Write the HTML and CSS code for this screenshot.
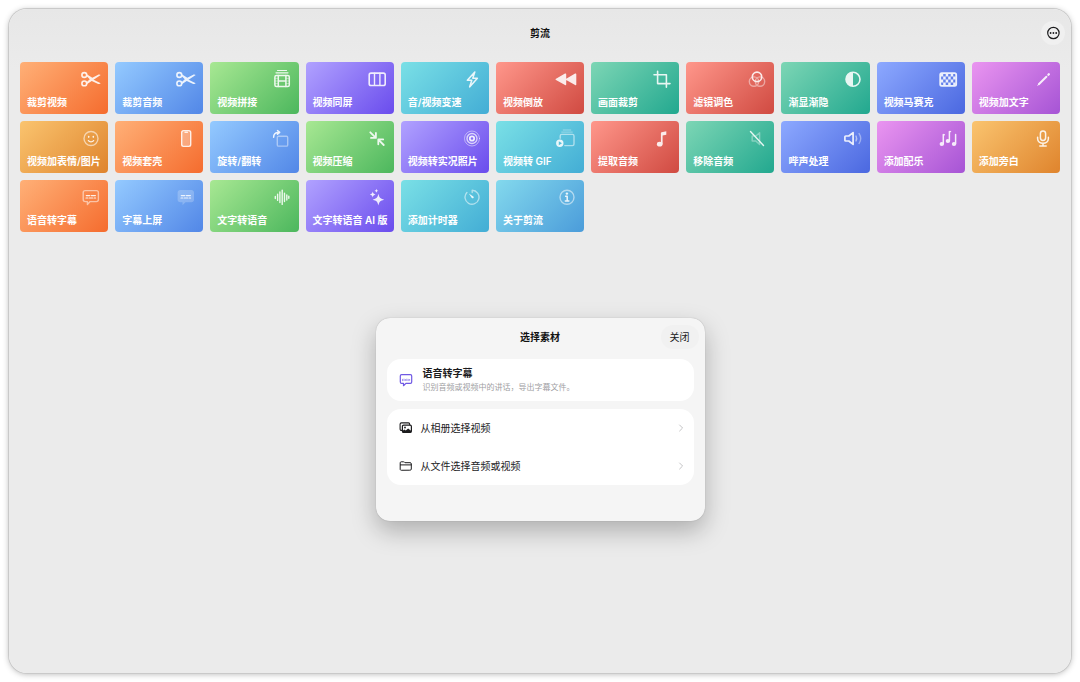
FILE: index.html
```html
<!DOCTYPE html>
<html lang="zh-CN">
<head>
<meta charset="utf-8">
<meta name="viewport" content="width=device-width, initial-scale=1">
<title>剪流</title>
<link rel="stylesheet" href="styles.css">
</head>
<body>
<svg class="sprite" aria-hidden="true">
  <symbol id="scissors" viewBox="0 0 24 24"><g stroke-width="1.6"><circle cx="5.3" cy="8" r="2.4"/><circle cx="5.3" cy="16.4" r="2.4"/></g><path class="solid" d="M7 8.5l1.2-.9 5.1 3.2 5.4-2.9c1.2-.6 2.3-.5 3 .2L8.2 16.9 7 15.8l3.8-3.6z"/><path class="solid" d="M13.6 12.3l8.1 4c-.7.8-1.9.9-3 .4l-7-3.3z"/></symbol>
  <symbol id="stack" viewBox="0 0 24 24"><path d="M7.5 3.5h9M6 5.8h12" stroke-width="1.2"/><rect x="4.9" y="8.4" width="14.4" height="11.2" rx="1.5" stroke-width="1.5"/><path d="M8.3 8.4v11.2M15.9 8.4v11.2M8.3 14h7.6" stroke-width="1.5"/><path d="M5 11.4h3M5 14h3M5 16.6h3M16 11.4h3M16 14h3M16 16.6h3" stroke-width=".7" opacity=".7"/></symbol>
  <symbol id="split" viewBox="0 0 24 24"><rect x="4.2" y="6.1" width="16" height="12.4" rx="1.8" stroke-width="1.6"/><path d="M9.5 6.2v12.2M14.9 6.2v12.2" stroke-width="1.4"/></symbol>
  <symbol id="bolt" viewBox="0 0 24 24"><path d="M14.8 5L7.3 13.2h4.5l-2.2 6.7 7.8-8.6h-4.6z" stroke-width="1.5"/></symbol>
  <symbol id="rewind" viewBox="0 0 24 24"><path class="solid" d="M11.2 7.2v10.3c0 .8-.5 1-1.2.6L1 13c-.6-.3-.6-1 0-1.3l9-5.1c.7-.4 1.2-.2 1.2.6zM21.3 7.2v10.3c0 .8-.5 1-1.2.6L11.2 13v-1.3l8.9-5.1c.7-.4 1.2-.2 1.2.6z"/></symbol>
  <symbol id="crop" viewBox="0 0 24 24"><path d="M7.6 4.2v12.4H20M4 7.8h12.4v12.4" stroke-width="1.6"/></symbol>
  <symbol id="filters" viewBox="0 0 24 24"><circle cx="12" cy="9.9" r="4.7" stroke-width="1.7"/><g stroke-width="1.4" opacity=".5"><circle cx="9" cy="14.6" r="4.7"/><circle cx="15" cy="14.6" r="4.7"/></g></symbol>
  <symbol id="contrast" viewBox="0 0 24 24"><circle cx="12" cy="12.3" r="7" stroke-width="1.6"/><path class="solid" d="M12 5.3v14a7 7 0 0 1 0-14z"/></symbol>
  <symbol id="mosaic" viewBox="0 0 24 24"><rect x="4.2" y="6.2" width="16" height="12.6" rx="1.6" stroke-width="1.8"/><path class="solid" d="M4.7 6.5h2.5v3H4.7zM9.7 6.5h2.5v3H9.7zM14.7 6.5h2.5v3h-2.5zM7.2 9.5h2.5v3H7.2zM12.2 9.5h2.5v3h-2.5zM17.2 9.5h2.5v3h-2.5zM4.7 12.5h2.5v3H4.7zM9.7 12.5h2.5v3H9.7zM14.7 12.5h2.5v3h-2.5zM7.2 15.5h2.5v3H7.2zM12.2 15.5h2.5v3h-2.5zM17.2 15.5h2.5v3h-2.5z"/></symbol>
  <symbol id="pencil" viewBox="0 0 24 24"><path d="M7.8 17.3l7.6-7.6" stroke-width="2"/><path d="M17.4 7.7l.4-.4" stroke-width="2.3"/><path d="M6.8 18.3l.7-.7" stroke-width="1"/></symbol>
  <symbol id="smile" viewBox="0 0 24 24"><circle cx="12" cy="12.5" r="7" stroke-width="1.4" opacity=".65"/><path d="M9.4 14.6c1.2 1.6 4 1.6 5.2 0" stroke-width="1.3"/><path d="M9.7 10.5v.6M14.3 10.5v.6" stroke-width="1.6"/></symbol>
  <symbol id="phone" viewBox="0 0 24 24"><rect x="7.8" y="4.8" width="8.8" height="15.4" rx="1.7" stroke-width="1.6"/><rect class="solid" x="9" y="6" width="6.4" height="13" opacity=".35"/><path d="M11 6.3h2.4" stroke-width="1.4"/></symbol>
  <symbol id="rotate" viewBox="0 0 24 24"><rect x="7.3" y="10.2" width="10.4" height="9.9" rx="1.2" stroke-width="1.4" opacity=".5"/><path d="M3.6 11.3c0-3 1.6-4.9 4.9-4.9M7.5 4.6l2.2 1.8-2.2 1.8" stroke-width="1.5"/></symbol>
  <symbol id="compress" viewBox="0 0 24 24"><path d="M5.3 6.3l5.4 5.4M6 11.9h4.9V7M18.7 19l-5.3-5.3M18.2 13.4h-4.9v4.9" stroke-width="1.8"/></symbol>
  <symbol id="live" viewBox="0 0 24 24"><circle cx="12" cy="12.5" r="2.2" stroke-width="1.8"/><circle cx="12" cy="12.5" r="5" stroke-width="1.4" opacity=".8"/><circle cx="12" cy="12.5" r="7.5" stroke-width="1" opacity=".55"/></symbol>
  <symbol id="gif" viewBox="0 0 24 24"><path d="M5.2 12.3V9.9c0-1 .5-1.5 1.5-1.5h10.8c1 0 1.5.5 1.5 1.5v8.2c0 1-.5 1.5-1.5 1.5H9.8" stroke-width="1.4" opacity=".6"/><path d="M6.7 6.1h10.6M8.2 4h7.6" stroke-width="1" opacity=".45"/><path class="solid" fill-rule="evenodd" d="M4.8 13.5a3.7 3.7 0 1 0 0 7.4 3.7 3.7 0 0 0 0-7.4zM3.8 15.2l3.2 2-3.2 2z"/></symbol>
  <symbol id="note" viewBox="0 0 24 24"><ellipse class="solid" cx="9.7" cy="18.2" rx="2.8" ry="2.4"/><path class="solid" d="M10.9 7.1c0-.5.3-.8.8-.9l4.6-1v3.5l-3.7.9v8.6h-1.7z"/></symbol>
  <symbol id="mute" viewBox="0 0 24 24"><path d="M14.6 6.8L10.8 10H7.2v5h3.6l3.8 3.4z" stroke-width="1.5" opacity=".4"/><path d="M5.5 5.6l13 13.8" stroke-width="1.4"/></symbol>
  <symbol id="speaker" viewBox="0 0 24 24"><path d="M12.1 6.6L7.8 10H4.7c-.5 0-.8.3-.8.8v3.4c0 .5.3.8.8.8h3.1l4.3 3.4z" stroke-width="1.7"/><path d="M15 10c.8 1.5.8 3.5 0 5" stroke-width="1.4" opacity=".6"/><path d="M18.1 7.6c2 3 2 6.8 0 9.8" stroke-width="1.4" opacity=".45"/></symbol>
  <symbol id="notes" viewBox="0 0 24 24"><g class="solid"><ellipse cx="5.8" cy="18" rx="2.2" ry="1.9"/><ellipse cx="11.9" cy="15" rx="2.2" ry="1.9"/><ellipse cx="18" cy="18" rx="2.2" ry="1.9"/></g><path d="M7.3 17.8V8.6M13.4 14.8V5.4M19.6 17.8V8.6" stroke-width="1.5"/><path d="M7.5 9.2l1-.5M13.6 6l1-.5" stroke-width="1.2"/></symbol>
  <symbol id="mic" viewBox="0 0 24 24"><rect x="9.4" y="5" width="5.2" height="9.4" rx="2.6" stroke-width="1.5"/><path d="M6.6 11.3v1.2c0 6.4 10.8 6.4 10.8 0v-1.2M12 17.5v2.5M8.8 20.1h6.4" stroke-width="1.5"/></symbol>
  <symbol id="caption" viewBox="0 0 24 24"><path d="M6.2 5.6h11.2c1.2 0 2 .8 2 2v7c0 1.2-.8 2-2 2h-6.3l-2.7 2.8v-2.8H6.2c-1.2 0-2-.8-2-2v-7c0-1.2.8-2 2-2z" stroke-width="1.4" opacity=".6"/><path d="M7.3 10.6h3.5M12.4 10.6h4M7 13h1.8M10.3 13h3.4M15.2 13h1.4" stroke-width="1.2"/></symbol>
  <symbol id="caption-fill" viewBox="0 0 24 24"><path class="solid" opacity=".25" d="M6.2 5h11.2C18.900 5 20 6 20 7.500v7.200c0 1.500-1.100 2.500-2.600 2.500h-6l-2.900 3v-3H6.200c-1.500 0-2.600-1-2.600-2.500V7.500C3.600 6 4.700 5 6.200 5z"/><path d="M7.300 10.600h3.500M12.400 10.600h4M7 13h1.800M10.300 13h3.400M15.200 13h1.400" stroke-width="1.200"/></symbol>
  <symbol id="wave" viewBox="0 0 24 24"><path d="M5.3 11.500v2M7.600 9.200v6.200M9.900 7v10.500M12.200 5.100v14.300M14.500 8.100v8.500M16.800 10v5M18.800 11.200v2.100" stroke-width="1.400"/></symbol>
  <symbol id="sparkles" viewBox="0 0 24 24"><path class="solid" d="M13.4 8.800c.9 4 1.600 4.800 5.800 5.900-4.200 1.100-4.900 1.900-5.800 5.900-.9-4-1.600-4.800-5.800-5.900 4.200-1.100 4.900-1.900 5.800-5.900zM7.700 6.500c.5 2 .9 2.400 2.900 3-2 .500-2.400.900-2.900 2.900-.5-2-.9-2.400-2.900-2.900 2-.600 2.400-1 2.900-3zM11.400 3.700c.3 1.300.7 1.700 2 2-1.300.300-1.700.700-2 2-.3-1.300-.7-1.700-2-2 1.300-.300 1.700-.700 2-2z"/></symbol>
  <symbol id="timer" viewBox="0 0 24 24"><path d="M12.200 7.600V5.200a7 7 0 1 1-5.300 2.200" stroke-width="1.400" opacity=".6"/><path class="solid" d="M8.800 8.400l4.500 3c1.200 1-.5 2.700-1.500 1.500z"/></symbol>
  <symbol id="info" viewBox="0 0 24 24"><circle cx="12" cy="12.300" r="7" stroke-width="1.400" opacity=".6"/><path d="M10.600 11.200h1.600v4.700M10.300 15.900h3.600" stroke-width="1.500"/><circle class="solid" cx="11.900" cy="8.600" r="1.200"/></symbol>
  <symbol id="more" viewBox="0 0 24 24"><circle cx="12.400" cy="12" r="5.700" stroke-width="1.200"/><g class="solid"><circle cx="9.600" cy="12" r=".9"/><circle cx="12.400" cy="12" r=".9"/><circle cx="15.200" cy="12" r=".9"/></g></symbol>
  <symbol id="speech" viewBox="0 0 14 14"><path d="M2.600 1.600h8.800c.8 0 1.300.500 1.300 1.300v6.200c0 .800-.5 1.300-1.300 1.300H6.900l-2.400 2.300v-2.300H2.600c-.8 0-1.300-.500-1.300-1.300V2.900c0-.800.5-1.300 1.300-1.300z" stroke-width="1.200"/><path d="M3.500 6.300v1.400M5 6.100v1.500M6.400 6.400v1.100M7.800 6.100v1.500M9.200 6.300v1.400M10.600 6.400v1" stroke-width=".8" opacity=".8"/></symbol>
  <symbol id="photos" viewBox="0 0 14 14"><path d="M3.100 9.400H2.400C1.600 9.400 1.100 8.900 1.100 8.100V3.200c0-.800.5-1.300 1.300-1.300h7c.8 0 1.300.500 1.300 1.300v.4" stroke-width="1.100"/><rect x="3.400" y="4.100" width="9" height="7.300" rx="1.300" stroke-width="1.200"/><path class="solid" d="M3.300 10.100l2.100-1.600 1.400 1 2.300-2.100 3.300 2.500v1c0 .500-.4.800-.8.800H4.100c-.4 0-.8-.300-.8-.800z"/><circle class="solid" cx="6" cy="6.500" r=".9"/></symbol>
  <symbol id="folder" viewBox="0 0 14 14"><path d="M1.900 11.200c-.5-.100-.7-.400-.7-.900V3.800c0-.600.4-1 1-1h2.200c.5 0 .8.100 1.100.4l.5.500h5c.9 0 1.300.400 1.300 1.100v5.400c0 .700-.5 1-1.100 1zM1.400 5.900h10.800" stroke-width="1"/></symbol>
  <symbol id="chevron" viewBox="0 0 8 10"><path d="M1.600 2L4.600 5 1.600 8" stroke-width="1"/></symbol>
</svg>

<div class="window">
  <header class="titlebar">
    <h1 class="title">剪流</h1>
    <button class="more-button" type="button" aria-label="更多"><svg class="icon"><use href="#more"/></svg></button>
  </header>

  <main class="content">
    <nav class="tools" aria-label="工具">
      <button type="button" class="tool orange"><svg class="icon"><use href="#scissors"/></svg><span>裁剪视频</span></button>
      <button type="button" class="tool blue"><svg class="icon"><use href="#scissors"/></svg><span>裁剪音频</span></button>
      <button type="button" class="tool green"><svg class="icon"><use href="#stack"/></svg><span>视频拼接</span></button>
      <button type="button" class="tool purple"><svg class="icon"><use href="#split"/></svg><span>视频同屏</span></button>
      <button type="button" class="tool cyan"><svg class="icon"><use href="#bolt"/></svg><span>音/视频变速</span></button>
      <button type="button" class="tool red"><svg class="icon"><use href="#rewind"/></svg><span>视频倒放</span></button>
      <button type="button" class="tool teal"><svg class="icon"><use href="#crop"/></svg><span>画面裁剪</span></button>
      <button type="button" class="tool red"><svg class="icon"><use href="#filters"/></svg><span>滤镜调色</span></button>
      <button type="button" class="tool teal"><svg class="icon"><use href="#contrast"/></svg><span>渐显渐隐</span></button>
      <button type="button" class="tool indigo"><svg class="icon"><use href="#mosaic"/></svg><span>视频马赛克</span></button>
      <button type="button" class="tool magenta"><svg class="icon"><use href="#pencil"/></svg><span>视频加文字</span></button>
      <button type="button" class="tool amber"><svg class="icon"><use href="#smile"/></svg><span>视频加表情/图片</span></button>
      <button type="button" class="tool orange"><svg class="icon"><use href="#phone"/></svg><span>视频套壳</span></button>
      <button type="button" class="tool blue"><svg class="icon"><use href="#rotate"/></svg><span>旋转/翻转</span></button>
      <button type="button" class="tool green"><svg class="icon"><use href="#compress"/></svg><span>视频压缩</span></button>
      <button type="button" class="tool purple"><svg class="icon"><use href="#live"/></svg><span>视频转实况照片</span></button>
      <button type="button" class="tool cyan"><svg class="icon"><use href="#gif"/></svg><span>视频转 GIF</span></button>
      <button type="button" class="tool red"><svg class="icon"><use href="#note"/></svg><span>提取音频</span></button>
      <button type="button" class="tool teal"><svg class="icon"><use href="#mute"/></svg><span>移除音频</span></button>
      <button type="button" class="tool indigo"><svg class="icon"><use href="#speaker"/></svg><span>哔声处理</span></button>
      <button type="button" class="tool magenta"><svg class="icon"><use href="#notes"/></svg><span>添加配乐</span></button>
      <button type="button" class="tool amber"><svg class="icon"><use href="#mic"/></svg><span>添加旁白</span></button>
      <button type="button" class="tool orange"><svg class="icon"><use href="#caption"/></svg><span>语音转字幕</span></button>
      <button type="button" class="tool blue"><svg class="icon"><use href="#caption-fill"/></svg><span>字幕上屏</span></button>
      <button type="button" class="tool green"><svg class="icon"><use href="#wave"/></svg><span>文字转语音</span></button>
      <button type="button" class="tool purple"><svg class="icon"><use href="#sparkles"/></svg><span>文字转语音 AI 版</span></button>
      <button type="button" class="tool cyan"><svg class="icon"><use href="#timer"/></svg><span>添加计时器</span></button>
      <button type="button" class="tool sky"><svg class="icon"><use href="#info"/></svg><span>关于剪流</span></button>
    </nav>

    <section class="sheet" role="dialog" aria-labelledby="sheet-title">
      <header class="sheet-header">
        <h2 class="title" id="sheet-title">选择素材</h2>
        <button class="close-button" type="button">关闭</button>
      </header>
      <div class="summary">
        <svg class="icon-small"><use href="#speech"/></svg>
        <div>
          <h3 class="summary-title">语音转字幕</h3>
          <p class="summary-text">识别音频或视频中的讲话，导出字幕文件。</p>
        </div>
      </div>
      <div class="sources">
        <button class="source" type="button"><svg class="icon-small"><use href="#photos"/></svg><span>从相册选择视频</span><svg class="chevron"><use href="#chevron"/></svg></button>
        <button class="source" type="button"><svg class="icon-small"><use href="#folder"/></svg><span>从文件选择音频或视频</span><svg class="chevron"><use href="#chevron"/></svg></button>
      </div>
    </section>
  </main>
</div>
</body>
</html>
```
FILE: styles.css
```css
* {
  box-sizing: border-box;
}

body {
  margin: 0;
  padding: 9px;
  background: #fff;
  color: #1c1c1e;
  font-family: Inter, "Noto Sans CJK SC", sans-serif;
  font-size: 10px;
  line-height: 14px;
}

h1, h2, h3, p {
  margin: 0;
}

button {
  padding: 0;
  border: 0;
  color: inherit;
  font: inherit;
  cursor: pointer;
}

svg {
  fill: none;
  stroke: currentColor;
  stroke-linecap: round;
  stroke-linejoin: round;
}

.solid {
  fill: currentColor;
  stroke: none;
}

.sprite {
  display: none;
}

.window {
  min-height: calc(100vh - 18px);
  border-radius: 18px;
  background: linear-gradient(#e7e7e7, #ebebeb 60px);
  box-shadow: 0 0 0 1px #c9c9c9, 0 1px 6px rgba(0, 0, 0, 0.3);
}

.titlebar,
.sheet-header {
  display: grid;
  grid-template-columns: 1fr auto 1fr;
  align-items: center;
}

.titlebar {
  height: 48px;
  padding: 0 6px;
}

.title {
  grid-column: 2;
  font-size: 10px;
  font-weight: 700;
  color: #111;
}

.more-button {
  justify-self: end;
  width: 24px;
  height: 24px;
  border-radius: 50%;
  background: #f0f0f0;
}

.icon {
  display: block;
  width: 24px;
  height: 24px;
}

.content {
  padding: 5px 11px 20px;
}

.tools {
  display: grid;
  grid-template-columns: repeat(11, 1fr);
  gap: 7px;
}

.tool {
  display: flex;
  flex-direction: column;
  justify-content: space-between;
  height: 52px;
  padding: 5px 5px 5px 7px;
  border-radius: 4px;
  color: #fff;
  font-weight: 600;
  text-align: left;
  white-space: nowrap;
}

.tool .icon {
  align-self: flex-end;
  opacity: 0.88;
}

.orange { background: linear-gradient(135deg, #ffb077, #f56c2e); }
.blue { background: linear-gradient(135deg, #94caff, #5287e7); }
.green { background: linear-gradient(135deg, #a8e893, #4cb75d); }
.purple { background: linear-gradient(135deg, #b1a2ff, #6a4ced); }
.cyan { background: linear-gradient(135deg, #7ae0e6, #43add5); }
.red { background: linear-gradient(135deg, #ff978b, #d04a41); }
.teal { background: linear-gradient(135deg, #7dd6b5, #22a88f); }
.indigo { background: linear-gradient(135deg, #8da9ff, #4b68e0); }
.magenta { background: linear-gradient(135deg, #ea95f0, #a654d5); }
.amber { background: linear-gradient(135deg, #fac46f, #df842d); }
.sky { background: linear-gradient(135deg, #83d9ed, #4b9cda); }

.sheet {
  width: 329px;
  max-width: 100%;
  margin: 86px auto 0;
  padding: 0 11px 36px;
  border-radius: 14px;
  background: #f5f5f5;
  box-shadow: 0 0 1px rgba(0, 0, 0, 0.3), 0 10px 24px rgba(0, 0, 0, 0.26);
}

.sheet-header {
  height: 37px;
  margin: 0 -5px 4px;
}

.close-button {
  justify-self: end;
  width: 38px;
  height: 24px;
  border-radius: 12px;
  background: #f1f1f1;
}

.summary,
.sources {
  border-radius: 14px;
  background: #fff;
}

.summary {
  display: flex;
  align-items: center;
  gap: 10px;
  height: 42px;
  margin-bottom: 8px;
  padding: 0 12px;
}

.icon-small {
  flex: none;
  width: 14px;
  height: 14px;
}

.summary .icon-small {
  color: #7059e4;
}

.summary-title {
  font-size: 10px;
  font-weight: 600;
}

.summary-text {
  color: #a0a0a3;
  font-size: 8px;
}

.source {
  display: flex;
  align-items: center;
  gap: 8px;
  width: 100%;
  height: 38px;
  padding: 0 8px 0 12px;
  background: none;
  text-align: left;
}

.source span {
  flex: 1;
}

.chevron {
  width: 8px;
  height: 10px;
  color: #c4c4c6;
}
```
